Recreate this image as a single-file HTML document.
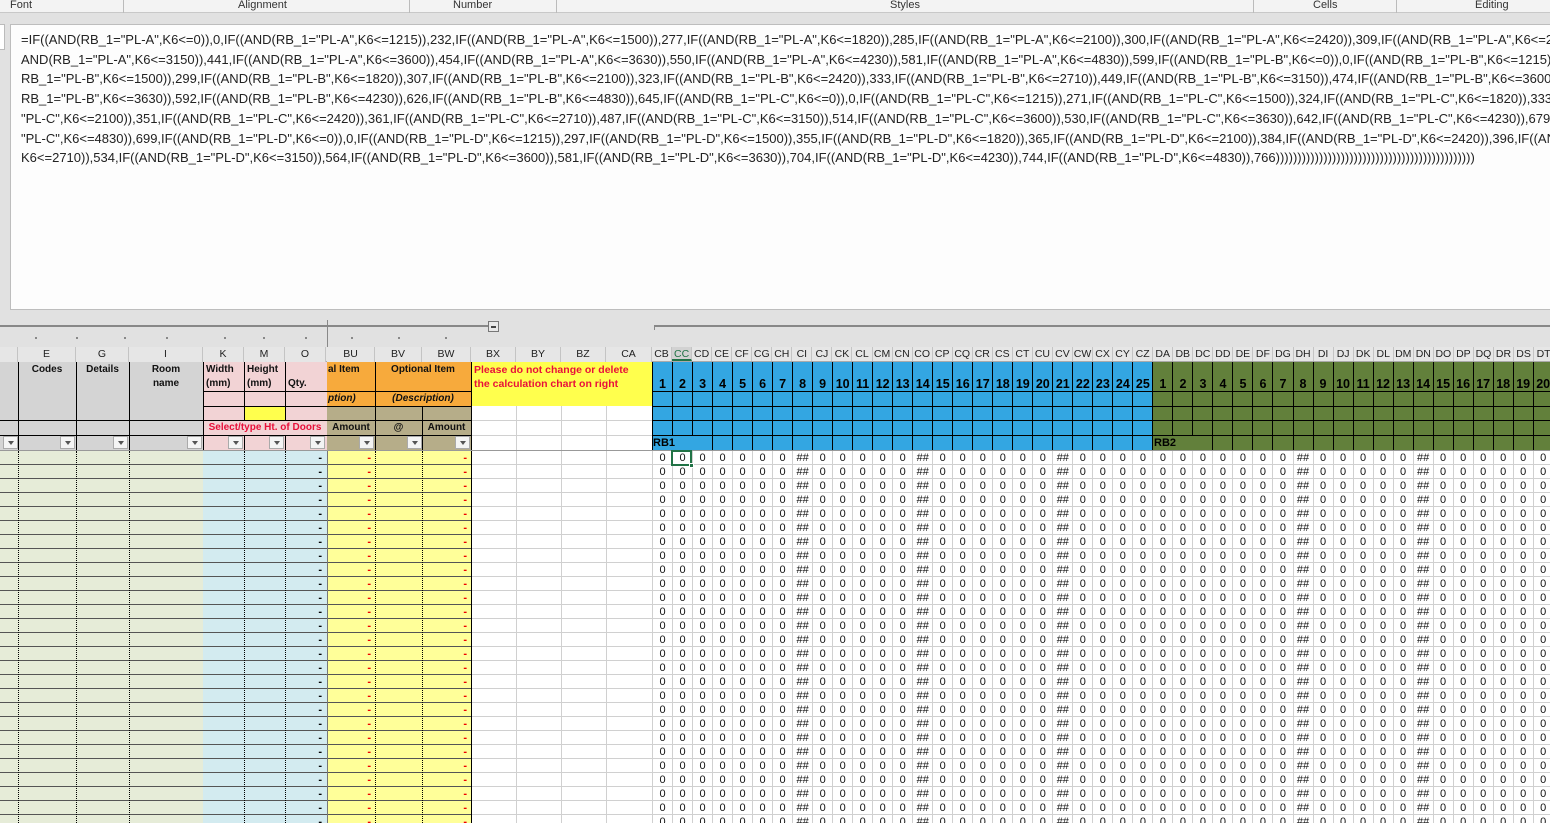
<!DOCTYPE html>
<html><head><meta charset="utf-8">
<style>
*{box-sizing:border-box;margin:0;padding:0}
html,body{width:1550px;height:823px;overflow:hidden}
body{background:#e1e1e1;font-family:"Liberation Sans",sans-serif;position:relative}
.a{position:absolute}
.rib{left:0;top:0;width:1550px;height:13px;background:#f3f3f3;border-bottom:1px solid #c8c8c8;font-size:11px;color:#333}
.rib span{position:absolute;top:-1px}
.fx{left:10px;top:24px;width:1545px;height:286px;background:#fdfdfd;border:1px solid #bdbdbd;font-size:13px;color:#222;padding:5px 0 0 10px;line-height:19.7px;overflow:hidden;white-space:nowrap}
.hdr{top:347px;height:15px;background:#e6e6e6;font-size:10.5px;color:#222;text-align:center;line-height:15px;border-right:1px solid #c4c4c4}
.cell{position:absolute;font-size:10px;font-weight:bold;color:#111;text-align:center;line-height:14px}
.dd{position:absolute;width:15px;height:13px;background:#f4f4f4;border:1px solid #aaa;top:436px}
.dd:after{content:"";position:absolute;left:4px;top:4px;border-left:3px solid transparent;border-right:3px solid transparent;border-top:4px solid #555}
.flex{display:flex}
.flex>div{flex:1}
.z{font-size:11px;line-height:14px;text-align:center;border-right:1px solid #d0d0d0;word-spacing:20px;color:#111;overflow:hidden;height:372px}
.b div{border-right:1px solid #000;font-size:12.5px;font-weight:bold;text-align:center;padding-top:15px;line-height:14px;background-image:linear-gradient(#000,#000),linear-gradient(#000,#000),linear-gradient(#000,#000),linear-gradient(#000,#000);background-size:100% 1px;background-repeat:no-repeat;background-position:0 29px,0 44px,0 58px,0 73px}
.h div{font-size:10.5px;text-align:center;border-right:1px solid #c4c4c4;line-height:15px;color:#222}
.dot{position:absolute;top:337px;width:2px;height:2px;background:#888}
</style></head><body>
<div class="a rib"><span style="left:10px">Font</span><span style="left:238px">Alignment</span><span style="left:453px">Number</span><span style="left:890px">Styles</span><span style="left:1313px">Cells</span><span style="left:1475px">Editing</span>
<span style="left:123px;top:0;height:13px;border-left:1px solid #bbb"></span><span style="left:409px;top:0;height:13px;border-left:1px solid #bbb"></span><span style="left:556px;top:0;height:13px;border-left:1px solid #bbb"></span><span style="left:1253px;top:0;height:13px;border-left:1px solid #bbb"></span><span style="left:1396px;top:0;height:13px;border-left:1px solid #bbb"></span></div>
<div class="a" style="left:0;top:24px;width:5px;height:26px;background:#fff;border:1px solid #bbb;border-left:none"></div>
<div class="a fx">=IF((AND(RB_1="PL-A",K6&lt;=0)),0,IF((AND(RB_1="PL-A",K6&lt;=1215)),232,IF((AND(RB_1="PL-A",K6&lt;=1500)),277,IF((AND(RB_1="PL-A",K6&lt;=1820)),285,IF((AND(RB_1="PL-A",K6&lt;=2100)),300,IF((AND(RB_1="PL-A",K6&lt;=2420)),309,IF((AND(RB_1="PL-A",K6&lt;=2<br>AND(RB_1="PL-A",K6&lt;=3150)),441,IF((AND(RB_1="PL-A",K6&lt;=3600)),454,IF((AND(RB_1="PL-A",K6&lt;=3630)),550,IF((AND(RB_1="PL-A",K6&lt;=4230)),581,IF((AND(RB_1="PL-A",K6&lt;=4830)),599,IF((AND(RB_1="PL-B",K6&lt;=0)),0,IF((AND(RB_1="PL-B",K6&lt;=1215)),<br>RB_1="PL-B",K6&lt;=1500)),299,IF((AND(RB_1="PL-B",K6&lt;=1820)),307,IF((AND(RB_1="PL-B",K6&lt;=2100)),323,IF((AND(RB_1="PL-B",K6&lt;=2420)),333,IF((AND(RB_1="PL-B",K6&lt;=2710)),449,IF((AND(RB_1="PL-B",K6&lt;=3150)),474,IF((AND(RB_1="PL-B",K6&lt;=3600)),<br>RB_1="PL-B",K6&lt;=3630)),592,IF((AND(RB_1="PL-B",K6&lt;=4230)),626,IF((AND(RB_1="PL-B",K6&lt;=4830)),645,IF((AND(RB_1="PL-C",K6&lt;=0)),0,IF((AND(RB_1="PL-C",K6&lt;=1215)),271,IF((AND(RB_1="PL-C",K6&lt;=1500)),324,IF((AND(RB_1="PL-C",K6&lt;=1820)),333,IF<br>"PL-C",K6&lt;=2100)),351,IF((AND(RB_1="PL-C",K6&lt;=2420)),361,IF((AND(RB_1="PL-C",K6&lt;=2710)),487,IF((AND(RB_1="PL-C",K6&lt;=3150)),514,IF((AND(RB_1="PL-C",K6&lt;=3600)),530,IF((AND(RB_1="PL-C",K6&lt;=3630)),642,IF((AND(RB_1="PL-C",K6&lt;=4230)),679,IF<br>"PL-C",K6&lt;=4830)),699,IF((AND(RB_1="PL-D",K6&lt;=0)),0,IF((AND(RB_1="PL-D",K6&lt;=1215)),297,IF((AND(RB_1="PL-D",K6&lt;=1500)),355,IF((AND(RB_1="PL-D",K6&lt;=1820)),365,IF((AND(RB_1="PL-D",K6&lt;=2100)),384,IF((AND(RB_1="PL-D",K6&lt;=2420)),396,IF((AND(<br>K6&lt;=2710)),534,IF((AND(RB_1="PL-D",K6&lt;=3150)),564,IF((AND(RB_1="PL-D",K6&lt;=3600)),581,IF((AND(RB_1="PL-D",K6&lt;=3630)),704,IF((AND(RB_1="PL-D",K6&lt;=4230)),744,IF((AND(RB_1="PL-D",K6&lt;=4830)),766))))))))))))))))))))))))))))))))))))))))))))))</div>

<!-- outline bars -->
<div class="a" style="left:0;top:325px;width:493px;height:2px;background:#888"></div>
<div class="a" style="left:488px;top:321px;width:11px;height:11px;border:1px solid #777;background:#e8e8e8"><div class="a" style="left:2px;top:4px;width:5px;height:2px;background:#444"></div></div>
<div class="a" style="left:654px;top:325px;width:896px;height:2px;background:#888"></div>
<div class="a" style="left:654px;top:325px;width:1px;height:5px;background:#888"></div>
<div class="a" style="left:327px;top:320px;width:1px;height:130px;background:#888"></div>
<div class="dot" style="left:35px"></div><div class="dot" style="left:76px"></div><div class="dot" style="left:124px"></div><div class="dot" style="left:166px"></div><div class="dot" style="left:224px"></div><div class="dot" style="left:263px"></div><div class="dot" style="left:305px"></div><div class="dot" style="left:351px"></div><div class="dot" style="left:398px"></div><div class="dot" style="left:445px"></div>

<!-- column headers -->
<div class="a" style="left:0;top:347px;width:652px;height:15px;background:#e6e6e6;border-bottom:1px solid #aaa"></div>
<div class="a hdr" style="left:0;width:18px"></div>
<div class="a hdr" style="left:18px;width:58px">E</div>
<div class="a hdr" style="left:76px;width:53px">G</div>
<div class="a hdr" style="left:129px;width:74px">I</div>
<div class="a hdr" style="left:203px;width:41px">K</div>
<div class="a hdr" style="left:244px;width:41px">M</div>
<div class="a hdr" style="left:285px;width:41px">O</div>
<div class="a hdr" style="left:327px;width:48px">BU</div>
<div class="a hdr" style="left:375px;width:47px">BV</div>
<div class="a hdr" style="left:422px;width:49px">BW</div>
<div class="a hdr" style="left:471px;width:45px">BX</div>
<div class="a hdr" style="left:516px;width:45px">BY</div>
<div class="a hdr" style="left:561px;width:45px">BZ</div>
<div class="a hdr" style="left:606px;width:46px">CA</div>
<div class="a flex h" style="left:652px;top:347px;width:902px;height:15px;background:#e6e6e6;border-bottom:1px solid #aaa">
<div>CB</div><div style="background:#d2d2d2;color:#217346;border-bottom:2px solid #217346">CC</div><div>CD</div><div>CE</div><div>CF</div><div>CG</div><div>CH</div><div>CI</div><div>CJ</div><div>CK</div><div>CL</div><div>CM</div><div>CN</div><div>CO</div><div>CP</div><div>CQ</div><div>CR</div><div>CS</div><div>CT</div><div>CU</div><div>CV</div><div>CW</div><div>CX</div><div>CY</div><div>CZ</div><div>DA</div><div>DB</div><div>DC</div><div>DD</div><div>DE</div><div>DF</div><div>DG</div><div>DH</div><div>DI</div><div>DJ</div><div>DK</div><div>DL</div><div>DM</div><div>DN</div><div>DO</div><div>DP</div><div>DQ</div><div>DR</div><div>DS</div><div>DT</div></div>

<!-- header block left -->
<div class="a" style="left:0;top:362px;width:203px;height:89px;background:#d4d4d4"></div>
<div class="a" style="left:0;top:420px;width:203px;height:1px;background:#000"></div>
<div class="a" style="left:0;top:435px;width:203px;height:1px;background:#000"></div>
<div class="a" style="left:18px;top:362px;width:1px;height:89px;background:#000"></div>
<div class="a" style="left:76px;top:362px;width:1px;height:89px;background:#000"></div>
<div class="a" style="left:129px;top:362px;width:1px;height:89px;background:#000"></div>
<div class="cell" style="left:18px;top:363px;width:58px">Codes</div>
<div class="cell" style="left:76px;top:363px;width:53px">Details</div>
<div class="cell" style="left:129px;top:363px;width:74px">Room<br>name</div>

<div class="a" style="left:203px;top:362px;width:124px;height:89px;background:#f2d3d5;border-left:1px solid #000"></div>
<div class="a" style="left:245px;top:406px;width:40px;height:14px;background:#ffff4d"></div>
<div class="a" style="left:203px;top:391px;width:124px;height:1px;background:#000"></div>
<div class="a" style="left:203px;top:406px;width:124px;height:1px;background:#000"></div>
<div class="a" style="left:203px;top:420px;width:124px;height:1px;background:#000"></div>
<div class="a" style="left:203px;top:435px;width:124px;height:1px;background:#000"></div>
<div class="a" style="left:244px;top:362px;width:1px;height:58px;background:#000"></div>
<div class="a" style="left:285px;top:362px;width:1px;height:58px;background:#000"></div>
<div class="a" style="left:244px;top:435px;width:1px;height:16px;background:#000"></div>
<div class="a" style="left:285px;top:435px;width:1px;height:16px;background:#000"></div>
<div class="cell" style="left:206px;top:363px;text-align:left">Width<br>(mm)</div>
<div class="cell" style="left:247px;top:363px;text-align:left">Height<br>(mm)</div>
<div class="cell" style="left:288px;top:377px;text-align:left">Qty.</div>
<div class="cell" style="left:203px;top:421px;width:124px;color:#e8103a;font-weight:bold;font-size:10px">Select/type Ht. of Doors</div>

<div class="a" style="left:327px;top:362px;width:144px;height:44px;background:#f7aa3c"></div>
<div class="a" style="left:327px;top:406px;width:144px;height:45px;background:#b6ad89"></div>
<div class="a" style="left:327px;top:391px;width:144px;height:1px;background:#000"></div>
<div class="a" style="left:327px;top:406px;width:144px;height:1px;background:#000"></div>
<div class="a" style="left:327px;top:420px;width:144px;height:1px;background:#000"></div>
<div class="a" style="left:327px;top:435px;width:144px;height:1px;background:#000"></div>
<div class="a" style="left:375px;top:362px;width:1px;height:89px;background:#000"></div>
<div class="a" style="left:422px;top:406px;width:1px;height:45px;background:#000"></div>
<div class="a" style="left:471px;top:362px;width:1px;height:89px;background:#000"></div>
<div class="cell" style="left:328px;top:363px;text-align:left">al Item</div>
<div class="cell" style="left:375px;top:363px;width:96px">Optional Item</div>
<div class="cell" style="left:328px;top:392px;text-align:left;font-style:italic">ption)</div>
<div class="cell" style="left:375px;top:392px;width:96px;font-style:italic">(Description)</div>
<div class="cell" style="left:327px;top:421px;width:48px">Amount</div>
<div class="cell" style="left:375px;top:421px;width:47px">@</div>
<div class="cell" style="left:422px;top:421px;width:49px">Amount</div>

<div class="a" style="left:472px;top:362px;width:180px;height:44px;background:#ffff4d"></div>
<div class="cell" style="left:474px;top:363px;text-align:left;color:#e8103a;font-size:10.5px">Please do not change or delete<br>the calculation chart on right</div>
<div class="a" style="left:472px;top:406px;width:180px;height:45px;background:#fff;background-image:linear-gradient(#d0d0d0,#d0d0d0),linear-gradient(#d0d0d0,#d0d0d0);background-size:100% 1px;background-repeat:no-repeat;background-position:0 14px,0 29px"></div>
<div class="a" style="left:516px;top:406px;width:1px;height:45px;background:#d0d0d0"></div>
<div class="a" style="left:561px;top:406px;width:1px;height:45px;background:#d0d0d0"></div>
<div class="a" style="left:606px;top:406px;width:1px;height:45px;background:#d0d0d0"></div>

<!-- dropdowns -->
<div class="dd" style="left:3px"></div><div class="dd" style="left:60px"></div><div class="dd" style="left:113px"></div><div class="dd" style="left:187px"></div>
<div class="dd" style="left:228px"></div><div class="dd" style="left:269px"></div><div class="dd" style="left:310px"></div>
<div class="dd" style="left:359px"></div><div class="dd" style="left:407px"></div><div class="dd" style="left:455px"></div>

<!-- band RB1 / RB2 -->
<div class="a flex b" style="left:652px;top:362px;width:902px;height:89px;border-left:1px solid #000">
<div style="background-color:#33a6e2">1</div><div style="background-color:#33a6e2">2</div><div style="background-color:#33a6e2">3</div><div style="background-color:#33a6e2">4</div><div style="background-color:#33a6e2">5</div><div style="background-color:#33a6e2">6</div><div style="background-color:#33a6e2">7</div><div style="background-color:#33a6e2">8</div><div style="background-color:#33a6e2">9</div><div style="background-color:#33a6e2">10</div><div style="background-color:#33a6e2">11</div><div style="background-color:#33a6e2">12</div><div style="background-color:#33a6e2">13</div><div style="background-color:#33a6e2">14</div><div style="background-color:#33a6e2">15</div><div style="background-color:#33a6e2">16</div><div style="background-color:#33a6e2">17</div><div style="background-color:#33a6e2">18</div><div style="background-color:#33a6e2">19</div><div style="background-color:#33a6e2">20</div><div style="background-color:#33a6e2">21</div><div style="background-color:#33a6e2">22</div><div style="background-color:#33a6e2">23</div><div style="background-color:#33a6e2">24</div><div style="background-color:#33a6e2">25</div>
<div style="background-color:#62803b">1</div><div style="background-color:#62803b">2</div><div style="background-color:#62803b">3</div><div style="background-color:#62803b">4</div><div style="background-color:#62803b">5</div><div style="background-color:#62803b">6</div><div style="background-color:#62803b">7</div><div style="background-color:#62803b">8</div><div style="background-color:#62803b">9</div><div style="background-color:#62803b">10</div><div style="background-color:#62803b">11</div><div style="background-color:#62803b">12</div><div style="background-color:#62803b">13</div><div style="background-color:#62803b">14</div><div style="background-color:#62803b">15</div><div style="background-color:#62803b">16</div><div style="background-color:#62803b">17</div><div style="background-color:#62803b">18</div><div style="background-color:#62803b">19</div><div style="background-color:#62803b">20</div></div>
<div class="a" style="left:653px;top:436px;width:40px;height:14px;background:#33a6e2;font-size:11px;font-weight:bold;line-height:14px">RB1</div>
<div class="a" style="left:1154px;top:436px;width:40px;height:14px;background:#62803b;font-size:11px;font-weight:bold;line-height:14px">RB2</div>
<div class="a" style="left:0;top:450px;width:1550px;height:1px;background:#999"></div>

<!-- data area -->
<div class="a" style="left:0;top:451px;width:203px;height:372px;background-color:#e6ecd8;background-image:repeating-linear-gradient(to bottom,transparent 0 13px,#555 13px 14px)"></div>
<div class="a" style="left:18px;top:451px;width:0;height:372px;border-left:1px dotted #000"></div>
<div class="a" style="left:76px;top:451px;width:0;height:372px;border-left:1px dotted #000"></div>
<div class="a" style="left:129px;top:451px;width:0;height:372px;border-left:1px dotted #000"></div>
<div class="a" style="left:203px;top:451px;width:124px;height:372px;background-color:#d3ebf0;background-image:repeating-linear-gradient(to bottom,transparent 0 13px,#555 13px 14px)"></div>
<div class="a" style="left:244px;top:451px;width:0;height:372px;border-left:1px dotted #000"></div>
<div class="a" style="left:285px;top:451px;width:0;height:372px;border-left:1px dotted #000"></div>
<div class="a" style="left:327px;top:451px;width:145px;height:372px;background-color:#ffff99;background-image:repeating-linear-gradient(to bottom,transparent 0 13px,#555 13px 14px);border-left:1px solid #777;border-right:1px solid #000"></div>
<div class="a" style="left:375px;top:451px;width:0;height:372px;border-left:1px dotted #000"></div>
<div class="a" style="left:422px;top:451px;width:0;height:372px;border-left:1px dotted #000"></div>
<div class="a" style="left:290px;top:451px;width:32px;font-size:11px;line-height:14px;text-align:right;word-spacing:40px;font-weight:bold">- - - - - - - - - - - - - - - - - - - - - - - - - - -</div>
<div class="a" style="left:330px;top:451px;width:41px;font-size:11px;line-height:14px;text-align:right;word-spacing:40px;color:#e00;font-weight:bold">- - - - - - - - - - - - - - - - - - - - - - - - - - -</div>
<div class="a" style="left:425px;top:451px;width:42px;font-size:11px;line-height:14px;text-align:right;word-spacing:40px;color:#e00;font-weight:bold">- - - - - - - - - - - - - - - - - - - - - - - - - - -</div>
<div class="a" style="left:472px;top:451px;width:180px;height:372px;background:#fff;background-image:repeating-linear-gradient(to bottom,transparent 0 13px,#d0d0d0 13px 14px)"></div>
<div class="a" style="left:516px;top:451px;width:1px;height:372px;background:#d0d0d0"></div>
<div class="a" style="left:561px;top:451px;width:1px;height:372px;background:#d0d0d0"></div>
<div class="a" style="left:606px;top:451px;width:1px;height:372px;background:#d0d0d0"></div>

<div class="a flex" style="left:652px;top:451px;width:902px;height:372px;background:#fff;background-image:repeating-linear-gradient(to bottom,transparent 0 13px,#d0d0d0 13px 14px);border-left:1px solid #d0d0d0">
<div class="z">0 0 0 0 0 0 0 0 0 0 0 0 0 0 0 0 0 0 0 0 0 0 0 0 0 0 0</div><div class="z">0 0 0 0 0 0 0 0 0 0 0 0 0 0 0 0 0 0 0 0 0 0 0 0 0 0 0</div><div class="z">0 0 0 0 0 0 0 0 0 0 0 0 0 0 0 0 0 0 0 0 0 0 0 0 0 0 0</div><div class="z">0 0 0 0 0 0 0 0 0 0 0 0 0 0 0 0 0 0 0 0 0 0 0 0 0 0 0</div><div class="z">0 0 0 0 0 0 0 0 0 0 0 0 0 0 0 0 0 0 0 0 0 0 0 0 0 0 0</div><div class="z">0 0 0 0 0 0 0 0 0 0 0 0 0 0 0 0 0 0 0 0 0 0 0 0 0 0 0</div><div class="z">0 0 0 0 0 0 0 0 0 0 0 0 0 0 0 0 0 0 0 0 0 0 0 0 0 0 0</div><div class="z">## ## ## ## ## ## ## ## ## ## ## ## ## ## ## ## ## ## ## ## ## ## ## ## ## ## ##</div><div class="z">0 0 0 0 0 0 0 0 0 0 0 0 0 0 0 0 0 0 0 0 0 0 0 0 0 0 0</div><div class="z">0 0 0 0 0 0 0 0 0 0 0 0 0 0 0 0 0 0 0 0 0 0 0 0 0 0 0</div><div class="z">0 0 0 0 0 0 0 0 0 0 0 0 0 0 0 0 0 0 0 0 0 0 0 0 0 0 0</div><div class="z">0 0 0 0 0 0 0 0 0 0 0 0 0 0 0 0 0 0 0 0 0 0 0 0 0 0 0</div><div class="z">0 0 0 0 0 0 0 0 0 0 0 0 0 0 0 0 0 0 0 0 0 0 0 0 0 0 0</div><div class="z">## ## ## ## ## ## ## ## ## ## ## ## ## ## ## ## ## ## ## ## ## ## ## ## ## ## ##</div><div class="z">0 0 0 0 0 0 0 0 0 0 0 0 0 0 0 0 0 0 0 0 0 0 0 0 0 0 0</div><div class="z">0 0 0 0 0 0 0 0 0 0 0 0 0 0 0 0 0 0 0 0 0 0 0 0 0 0 0</div><div class="z">0 0 0 0 0 0 0 0 0 0 0 0 0 0 0 0 0 0 0 0 0 0 0 0 0 0 0</div><div class="z">0 0 0 0 0 0 0 0 0 0 0 0 0 0 0 0 0 0 0 0 0 0 0 0 0 0 0</div><div class="z">0 0 0 0 0 0 0 0 0 0 0 0 0 0 0 0 0 0 0 0 0 0 0 0 0 0 0</div><div class="z">0 0 0 0 0 0 0 0 0 0 0 0 0 0 0 0 0 0 0 0 0 0 0 0 0 0 0</div><div class="z">## ## ## ## ## ## ## ## ## ## ## ## ## ## ## ## ## ## ## ## ## ## ## ## ## ## ##</div><div class="z">0 0 0 0 0 0 0 0 0 0 0 0 0 0 0 0 0 0 0 0 0 0 0 0 0 0 0</div><div class="z">0 0 0 0 0 0 0 0 0 0 0 0 0 0 0 0 0 0 0 0 0 0 0 0 0 0 0</div><div class="z">0 0 0 0 0 0 0 0 0 0 0 0 0 0 0 0 0 0 0 0 0 0 0 0 0 0 0</div><div class="z">0 0 0 0 0 0 0 0 0 0 0 0 0 0 0 0 0 0 0 0 0 0 0 0 0 0 0</div>
<div class="z">0 0 0 0 0 0 0 0 0 0 0 0 0 0 0 0 0 0 0 0 0 0 0 0 0 0 0</div><div class="z">0 0 0 0 0 0 0 0 0 0 0 0 0 0 0 0 0 0 0 0 0 0 0 0 0 0 0</div><div class="z">0 0 0 0 0 0 0 0 0 0 0 0 0 0 0 0 0 0 0 0 0 0 0 0 0 0 0</div><div class="z">0 0 0 0 0 0 0 0 0 0 0 0 0 0 0 0 0 0 0 0 0 0 0 0 0 0 0</div><div class="z">0 0 0 0 0 0 0 0 0 0 0 0 0 0 0 0 0 0 0 0 0 0 0 0 0 0 0</div><div class="z">0 0 0 0 0 0 0 0 0 0 0 0 0 0 0 0 0 0 0 0 0 0 0 0 0 0 0</div><div class="z">0 0 0 0 0 0 0 0 0 0 0 0 0 0 0 0 0 0 0 0 0 0 0 0 0 0 0</div><div class="z">## ## ## ## ## ## ## ## ## ## ## ## ## ## ## ## ## ## ## ## ## ## ## ## ## ## ##</div><div class="z">0 0 0 0 0 0 0 0 0 0 0 0 0 0 0 0 0 0 0 0 0 0 0 0 0 0 0</div><div class="z">0 0 0 0 0 0 0 0 0 0 0 0 0 0 0 0 0 0 0 0 0 0 0 0 0 0 0</div><div class="z">0 0 0 0 0 0 0 0 0 0 0 0 0 0 0 0 0 0 0 0 0 0 0 0 0 0 0</div><div class="z">0 0 0 0 0 0 0 0 0 0 0 0 0 0 0 0 0 0 0 0 0 0 0 0 0 0 0</div><div class="z">0 0 0 0 0 0 0 0 0 0 0 0 0 0 0 0 0 0 0 0 0 0 0 0 0 0 0</div><div class="z">## ## ## ## ## ## ## ## ## ## ## ## ## ## ## ## ## ## ## ## ## ## ## ## ## ## ##</div><div class="z">0 0 0 0 0 0 0 0 0 0 0 0 0 0 0 0 0 0 0 0 0 0 0 0 0 0 0</div><div class="z">0 0 0 0 0 0 0 0 0 0 0 0 0 0 0 0 0 0 0 0 0 0 0 0 0 0 0</div><div class="z">0 0 0 0 0 0 0 0 0 0 0 0 0 0 0 0 0 0 0 0 0 0 0 0 0 0 0</div><div class="z">0 0 0 0 0 0 0 0 0 0 0 0 0 0 0 0 0 0 0 0 0 0 0 0 0 0 0</div><div class="z">0 0 0 0 0 0 0 0 0 0 0 0 0 0 0 0 0 0 0 0 0 0 0 0 0 0 0</div><div class="z">0 0 0 0 0 0 0 0 0 0 0 0 0 0 0 0 0 0 0 0 0 0 0 0 0 0 0</div></div>
<div class="a" style="left:671px;top:450px;width:21px;height:16px;border:2px solid #217346"></div>
<div class="a" style="left:689px;top:463px;width:5px;height:5px;background:#217346;border:1px solid #fff"></div>
</body></html>
